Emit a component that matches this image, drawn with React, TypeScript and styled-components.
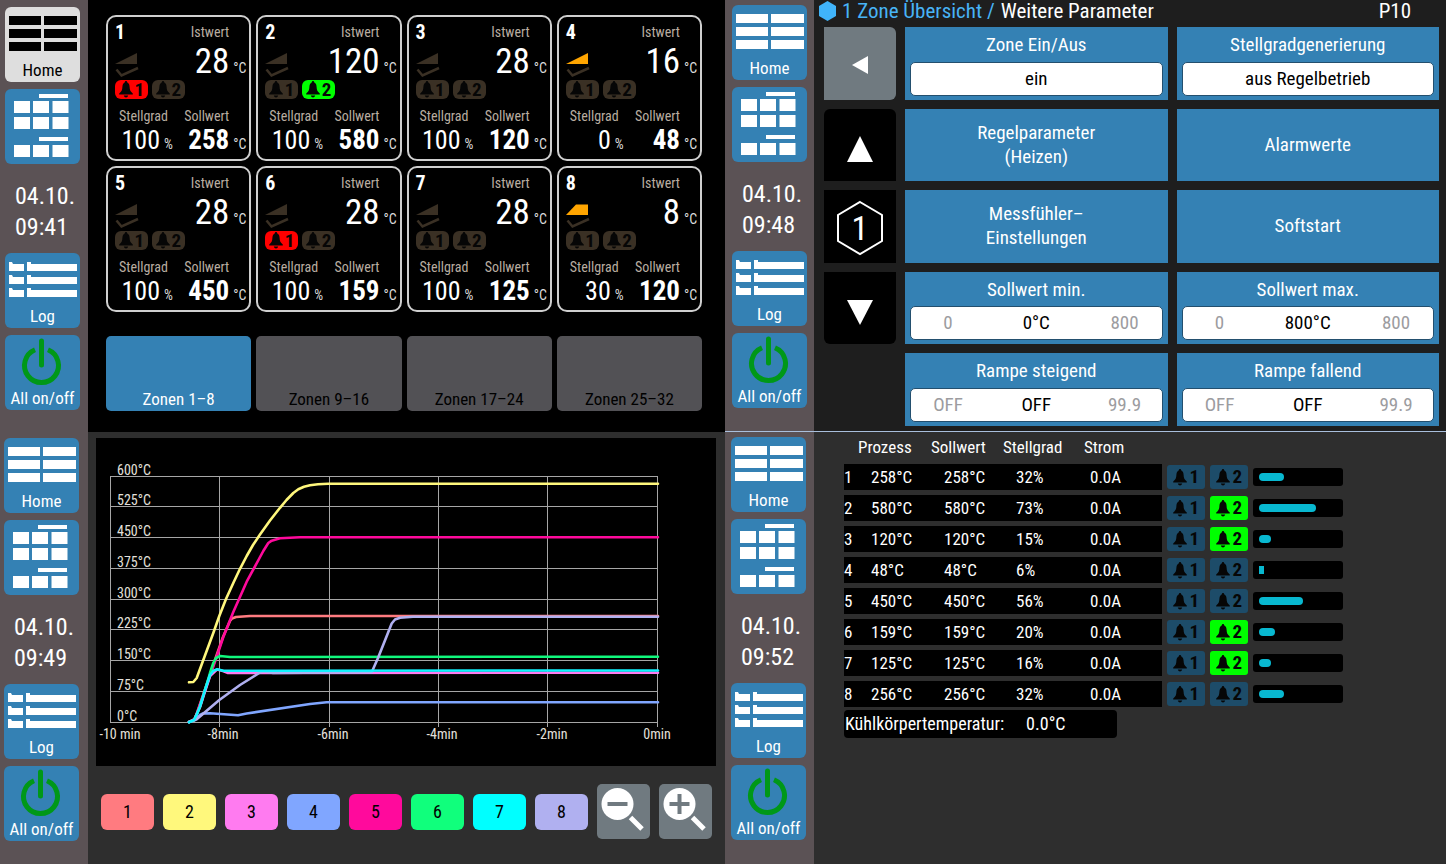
import React from "react";
import styled, { createGlobalStyle, css } from "styled-components";

const color = {
  blue: "#3481b4",
  rail: "#5b5255",
  panel: "#2e2e2e",
  dark: "#1e1e1e",
  idle: "#3a3024",
  alarmIdle: "#1d4c69",
  green: "#00ff00",
  red: "#ff0000",
  grey: "#707a80",
};

const GlobalStyle = createGlobalStyle`
  * { box-sizing: border-box; }
  body {
    margin: 0;
    background: #000;
    color: #fff;
    font-family: "Roboto Condensed", "Liberation Sans Narrow", "Open Sans Condensed", "DejaVu Sans Condensed", sans-serif;
  }
  button, input { font: inherit; color: inherit; border: 0; padding: 0; margin: 0; }
  button { cursor: pointer; }
  svg { display: block; flex: none; }
`;

const Screens = styled.main`
  display: grid;
  grid-template-columns: 725fr 721fr;
  grid-template-rows: 1fr 1fr;
  min-height: 100vh;
`;

const Screen = styled.section<{ $bg: string; $line?: boolean }>`
  display: flex;
  min-width: 0;
  background: ${(p) => p.$bg};
  ${(p) => p.$line && css`border-bottom: 1px solid #a9bfdc;`}
`;

/* ---------- side rail ---------- */

const Rail = styled.nav<{ $top: number; $left: number; $width: number }>`
  flex: none;
  display: flex;
  flex-direction: column;
  gap: 7px;
  width: ${(p) => p.$width}px;
  padding: ${(p) => p.$top}px 0 0 ${(p) => p.$left}px;
  background: ${color.rail};
`;

const RailButton = styled.button<{ $active?: boolean }>`
  display: flex;
  flex-direction: column;
  width: 75px;
  height: 75px;
  border-radius: 6px;
  background: ${(p) => (p.$active ? "#dedede" : color.blue)};
  color: ${(p) => (p.$active ? "#000" : "#fff")};
  overflow: hidden;
`;

const RailLabel = styled.span`
  width: 100%;
  font-size: 17px;
  line-height: 23px;
  text-align: center;
  white-space: nowrap;
`;

const Clock = styled.time`
  height: 75px;
  padding: 10px 0 0 10px;
  font-size: 24px;
  line-height: 31px;
  white-space: nowrap;
`;

const HomeIcon = () => (
  <svg width="75" height="52" fill="currentColor" aria-hidden="true">
    {[9, 22, 35].map((y) => (
      <path key={y} d={`M4 ${y}h32v9h-32z M39 ${y}h33v9h-33z`} />
    ))}
  </svg>
);

const ZonesIcon = () => (
  <svg width="75" height="75" fill="currentColor" aria-hidden="true">
    <path d="M34 5h29v4h-29z M34 48h29v4h-29z" />
    {[12, 28, 56].map((y) => (
      <path key={y} d={`M9 ${y}h16v12h-16z M28 ${y}h16v12h-16z M47.500 ${y}h16v12h-16z`} />
    ))}
  </svg>
);

const LogIcon = () => (
  <svg width="75" height="52" fill="currentColor" aria-hidden="true">
    {[9, 22, 35].map((y) => (
      <path key={y} d={`M4 ${y}h3l1 2h11v7h-15z M22 ${y}h4v2h46v7h-50z`} />
    ))}
  </svg>
);

const PowerIcon = () => (
  <svg width="75" height="52" fill="none" stroke="#009818" strokeWidth="5" aria-hidden="true">
    <path d="M30 14.800A17 17 0 1 0 43 14.800" />
    <path d="M36.500 6v24" strokeLinecap="round" />
  </svg>
);

type RailProps = { time: string; top: number; left: number; width: number; homeActive?: boolean };

const SideRail = ({ time, top, left, width, homeActive }: RailProps) => (
  <Rail $top={top} $left={left} $width={width} aria-label="Hauptnavigation">
    <RailButton $active={homeActive}>
      <HomeIcon />
      <RailLabel>Home</RailLabel>
    </RailButton>
    <RailButton aria-label="Zonen">
      <ZonesIcon />
    </RailButton>
    <Clock>
      04.10.
      <br />
      {time}
    </Clock>
    <RailButton>
      <LogIcon />
      <RailLabel>Log</RailLabel>
    </RailButton>
    <RailButton>
      <PowerIcon />
      <RailLabel>All on/off</RailLabel>
    </RailButton>
  </Rail>
);

/* ---------- alarm badges ---------- */

const BadgeBox = styled.span<{ $bg: string; $wide?: boolean }>`
  display: flex;
  align-items: center;
  justify-content: space-between;
  flex: none;
  width: ${(p) => (p.$wide ? 38 : 33)}px;
  height: ${(p) => (p.$wide ? 24 : 19)}px;
  padding: 0 ${(p) => (p.$wide ? 6 : 4)}px;
  border-radius: ${(p) => (p.$wide ? 3 : 6)}px;
  background: ${(p) => p.$bg};
  color: #060606;
  font-size: 19px;
  font-weight: 700;
  line-height: 20px;
`;

const Badge = ({ n, bg, wide }: { n: number; bg: string; wide?: boolean }) => (
  <BadgeBox $bg={bg} $wide={wide}>
    <svg width="14" height="17" viewBox="0 0 14 17" fill="currentColor" aria-hidden="true">
      <path d="M7 0c.8 0 1.200.6 1.300 1.500C10 2.300 10.500 4 10.600 6c.1 3 .8 4.500 3.200 6.500V13.400H.2v-.9C2.600 10.500 3.300 9 3.400 6c.1-2 .6-3.700 2.300-4.500C5.800.6 6.200 0 7 0z M4.800 14.600h4.400c-.3 1.300-1.200 1.900-2.200 1.900s-1.900-.6-2.200-1.900z" />
    </svg>
    {n}
  </BadgeBox>
);

/* ---------- zone overview ---------- */

const Overview = styled.div`
  flex: 1;
  min-width: 0;
  padding: 15px 23px 21px 18px;
`;

const FourColumns = styled.div`
  display: grid;
  grid-template-columns: repeat(4, 1fr);
  gap: 5px;
`;

const Tabs = styled(FourColumns)`
  margin-top: 24px;
`;

const Card = styled.article`
  height: 146px;
  padding: 4px 3px 0 7px;
  border: 2px solid #cfcfcf;
  border-radius: 10px;
`;

const CardRow = styled.div<{ $h: number }>`
  display: flex;
  align-items: center;
  justify-content: space-between;
  height: ${(p) => p.$h}px;
`;

const LabelRow = styled(CardRow)`
  padding: 0 17px 0 4px;
`;

const CardLabel = styled.span`
  color: #b9ada0;
  font-size: 14px;
  line-height: 16px;
`;

const ZoneNo = styled.strong`
  font-size: 20px;
  line-height: 22px;
`;

const BadgeRow = styled.div<{ $gap: number }>`
  display: flex;
  align-items: center;
  gap: ${(p) => p.$gap}px;
`;

const Reading = styled.span<{ $size: number; $bold?: boolean; $width?: number }>`
  display: flex;
  align-items: baseline;
  justify-content: flex-end;
  width: ${(p) => (p.$width ? `${p.$width}px` : "auto")};
  font-size: ${(p) => p.$size}px;
  font-weight: ${(p) => (p.$bold ? 700 : 400)};
  line-height: 32px;
`;

const Unit = styled.span`
  width: 17px;
  padding-left: 4px;
  font-size: 14px;
  font-weight: 400;
  line-height: 16px;
  color: #ddd;
  white-space: nowrap;
`;

const Tab = styled.button<{ $active?: boolean }>`
  display: flex;
  align-items: flex-end;
  justify-content: center;
  height: 75px;
  padding-bottom: 2px;
  border-radius: 5px;
  background: ${(p) => (p.$active ? color.blue : "#525155")};
  color: ${(p) => (p.$active ? "#fff" : "#000")};
  font-size: 17px;
  line-height: 20px;
`;

const RampIcon = ({ kind }: { kind?: "ramp" | "hold" }) => (
  <svg width="24" height="32" viewBox="0 0 24 32" aria-hidden="true">
    {kind === "hold" ? (
      <path d="M0 18 10 7.500H22V18z" fill="#ffa500" />
    ) : (
      <path d="M0 18 22 7V18z" fill={kind ? "#ffa500" : color.idle} />
    )}
    <path d="M1.500 23.500 6.500 29.500 23 22" fill="none" stroke={color.idle} strokeWidth="2.500" />
  </svg>
);

type Zone = {
  actual: number;
  output: number;
  target: number;
  alarm1?: boolean;
  alarm2?: boolean;
  ramp?: "ramp" | "hold";
};

const zones: Zone[] = [
  { actual: 28, output: 100, target: 258, alarm1: true },
  { actual: 120, output: 100, target: 580, alarm2: true },
  { actual: 28, output: 100, target: 120 },
  { actual: 16, output: 0, target: 48, ramp: "ramp" },
  { actual: 28, output: 100, target: 450 },
  { actual: 28, output: 100, target: 159, alarm1: true },
  { actual: 28, output: 100, target: 125 },
  { actual: 8, output: 30, target: 120, ramp: "hold" },
];

const ZoneCard = ({ zone, no }: { zone: Zone; no: number }) => (
  <Card>
    <CardRow $h={22}>
      <ZoneNo>{no}</ZoneNo>
      <LabelRow as="span" $h={20}>
        <CardLabel>Istwert</CardLabel>
      </LabelRow>
    </CardRow>
    <CardRow $h={37}>
      <RampIcon kind={zone.ramp} />
      <Reading $size={35}>
        {zone.actual}
        <Unit>°C</Unit>
      </Reading>
    </CardRow>
    <BadgeRow $gap={4}>
      <Badge n={1} bg={zone.alarm1 ? color.red : color.idle} />
      <Badge n={2} bg={zone.alarm2 ? color.green : color.idle} />
    </BadgeRow>
    <LabelRow $h={33}>
      <CardLabel>Stellgrad</CardLabel>
      <CardLabel>Sollwert</CardLabel>
    </LabelRow>
    <CardRow $h={16}>
      <Reading $size={26} $width={62}>
        {zone.output}
        <Unit>%</Unit>
      </Reading>
      <Reading $size={27} $bold>
        {zone.target}
        <Unit>°C</Unit>
      </Reading>
    </CardRow>
  </Card>
);

const ZoneOverview = () => (
  <Screen $bg="#000">
    <SideRail time="09:41" top={7} left={5} width={88} homeActive />
    <Overview>
      <FourColumns>
        {zones.map((z, i) => (
          <ZoneCard key={i} zone={z} no={i + 1} />
        ))}
      </FourColumns>
      <Tabs>
        <Tab $active>Zonen 1–8</Tab>
        <Tab>Zonen 9–16</Tab>
        <Tab>Zonen 17–24</Tab>
        <Tab>Zonen 25–32</Tab>
      </Tabs>
    </Overview>
  </Screen>
);

/* ---------- parameters ---------- */

const Parameters = styled.div`
  flex: 1;
  display: flex;
  flex-direction: column;
  min-width: 0;
  padding: 0 7px 5px 5px;
`;

const Crumbs = styled.header`
  display: flex;
  align-items: center;
  gap: 6px;
  height: 22px;
  margin-bottom: 5px;
  padding-right: 28px;
  font-size: 21px;
  line-height: 22px;
  white-space: nowrap;
`;

const CrumbLink = styled.a`
  color: #48b4f6;
  text-decoration: none;
`;

const PageNo = styled.span`
  margin-left: auto;
`;

const ParamGrid = styled.div`
  flex: 1;
  display: grid;
  grid-template-columns: 72px 1fr 1fr;
  grid-template-rows: repeat(5, 1fr);
  gap: 9px;
  padding-left: 5px;
`;

const NavButton = styled.button<{ $grey?: boolean; $radius: string }>`
  display: flex;
  align-items: center;
  justify-content: center;
  grid-column: 1;
  background: ${(p) => (p.$grey ? color.grey : "#000")};
  border-radius: ${(p) => p.$radius};
`;

const tile = css`
  background: ${color.blue};
  color: #fff;
  font-size: 19px;
  line-height: 24px;
  text-align: center;
`;

const Tile = styled.button`
  ${tile}
  white-space: pre-line;
`;

const Field = styled.label`
  ${tile}
  display: flex;
  flex-direction: column;
  justify-content: space-between;
  padding: 6px 5px 4px;
`;

const ValueBox = styled.span`
  display: grid;
  grid-template-columns: 74px 1fr 74px;
  align-items: center;
  height: 34px;
  border: 1px solid #234f6e;
  border-radius: 5px;
  background: #fff;
  color: #9c9ca0;
`;

const ValueInput = styled.input<{ $full?: boolean }>`
  grid-column: ${(p) => (p.$full ? "1 / -1" : "auto")};
  width: 100%;
  min-width: 0;
  background: none;
  color: #000;
  text-align: center;
  outline: 0;
`;

type FieldProps = { label: string; value: string; min?: string; max?: string };

const ParamField = ({ label, value, min, max }: FieldProps) => (
  <Field>
    {label}
    <ValueBox>
      {min && <span>{min}</span>}
      <ValueInput defaultValue={value} $full={!min} />
      {max && <span>{max}</span>}
    </ValueBox>
  </Field>
);

const HexText = styled.text`
  font-size: 34px;
  fill: #fff;
`;

const ParameterPage = () => (
  <Screen $bg={color.dark} $line>
    <SideRail time="09:48" top={5} left={7} width={89} />
    <Parameters>
      <Crumbs>
        <svg width="17" height="20" viewBox="0 0 17 20" aria-hidden="true">
          <path d="M8.500 0 17 5v10l-8.500 5L0 15V5z" fill="#40b4fa" />
        </svg>
        <CrumbLink href="#zone">1 Zone Übersicht /</CrumbLink>
        <span>Weitere Parameter</span>
        <PageNo>P10</PageNo>
      </Crumbs>
      <ParamGrid>
        <NavButton $grey $radius="0 6px 6px 0" aria-label="Zurück">
          <svg width="16" height="22" fill="#fff">
            <path d="M0 13 16 4v18z" />
          </svg>
        </NavButton>
        <ParamField label="Zone Ein/Aus" value="ein" />
        <ParamField label="Stellgradgenerierung" value="aus Regelbetrieb" />
        <NavButton $radius="6px 6px 0 0" aria-label="Vorherige Zone">
          <svg width="26" height="34" fill="#fff">
            <path d="M0 34 13 8l13 26z" />
          </svg>
        </NavButton>
        <Tile>{"Regelparameter\n(Heizen)"}</Tile>
        <Tile>Alarmwerte</Tile>
        <NavButton $radius="0" aria-label="Zone 1">
          <svg width="48" height="60" viewBox="0 0 48 60">
            <path d="M24 6 46 19v26L24 58 2 45V19z" fill="none" stroke="#fff" strokeWidth="2" />
            <HexText x="24" y="44" textAnchor="middle">
              1
            </HexText>
          </svg>
        </NavButton>
        <Tile>{"Messfühler–\nEinstellungen"}</Tile>
        <Tile>Softstart</Tile>
        <NavButton $radius="0 0 6px 6px" aria-label="Nächste Zone">
          <svg width="26" height="34" fill="#fff">
            <path d="M0 9h26L13 34z" />
          </svg>
        </NavButton>
        <ParamField label="Sollwert min." min="0" value="0°C" max="800" />
        <ParamField label="Sollwert max." min="0" value="800°C" max="800" />
        <span />
        <ParamField label="Rampe steigend" min="OFF" value="OFF" max="99.9" />
        <ParamField label="Rampe fallend" min="OFF" value="OFF" max="99.9" />
      </ParamGrid>
    </Parameters>
  </Screen>
);

/* ---------- trend chart ---------- */

const Trend = styled.div`
  flex: 1;
  min-width: 0;
  padding: 6px 9px 0 8px;
`;

const Chart = styled.svg`
  width: 100%;
  height: auto;
  background: #000;
`;

const AxisText = styled.text`
  font-size: 14px;
  fill: #e4e0dc;
`;

const Legend = styled.div`
  display: flex;
  align-items: center;
  gap: 9px;
  padding: 18px 4px 0 5px;
`;

const SeriesButton = styled.button<{ $bg: string }>`
  width: 53px;
  height: 36px;
  border-radius: 6px;
  background: ${(p) => p.$bg};
  color: #000;
  font-size: 18px;
`;

const ZoomButton = styled.button`
  width: 53px;
  height: 55px;
  border-radius: 5px;
  background: ${color.grey};
`;

const yAxis = [
  ["600°C", 38.5],
  ["525°C", 68.5],
  ["450°C", 99.5],
  ["375°C", 130.5],
  ["300°C", 161.5],
  ["225°C", 191.5],
  ["150°C", 222.5],
  ["75°C", 253.5],
  ["0°C", 284.5],
] as const;

const xAxis = [
  ["-10 min", 14.5, 24],
  ["-8min", 123.5, 127],
  ["-6min", 233.5, 237],
  ["-4min", 342.5, 346],
  ["-2min", 451.5, 456],
  ["0min", 561.5, 561],
] as const;

const curves: [string, string][] = [
  ["#ff7b80", "93,284 99,281 120,219 127,199 134,183 136,180.500 140,179 154,178 562,178"],
  ["#fff77c", "93,244.300 97.300,244 100.700,240 107.300,222 117.300,195 123.300,178 130,161 137.300,145 144,130.800 150.700,118 157,107 164,96.500 174,82.500 184,69.800 190.500,62 197.300,55 202.300,51.300 208,48.800 214,47.300 222,46.200 232,45.800 562,45.800"],
  ["#ff0a9c", "93,284 99,281 120.700,218.700 127.300,199 137.300,174 150.700,143.700 167.300,113 172.300,105 175.700,102.700 184,100.300 204,99.300 562,99.300"],
  ["#10f87c", "93,284 98,282 104,269 114,235 117.300,225 120,220 124,218 134,219 562,218.700"],
  ["#ff7bf0", "93,284 98,282 104,269 114,238 121,231.500 127,233 132,235 562,234.700"],
  ["#80a6ff", "93,284 99,282 104,277 107,275.500 114,275.300 142,277.300 150.700,275.500 214,266 230.700,264.300 562,264.300"],
  ["#b0b0f0", "93,284 100.700,281.300 123.300,262 144,247 164,234.500 168,233.500 177,235 275.700,234.300 282,220 295.700,185.500 299,181.500 304,179.700 317,178.700 562,178.700"],
  ["#10f4ff", "93,284.300 98,282 101,276 104,268.500 109,252 114,237 117.300,232.700 121.300,231.300 127.300,232.700 562,232.500"],
];

const series = ["#ff7b80", "#fff87c", "#ff7bf0", "#80a6ff", "#ff0a9c", "#10ff7c", "#00ffff", "#b0b0f0"];

const Magnifier = ({ plus }: { plus?: boolean }) => (
  <svg width="53" height="55" viewBox="0 0 53 55" aria-hidden="true">
    <circle cx="20.500" cy="20" r="16" fill="#fff" />
    <path d="M33.500 33.500 45 45" stroke="#fff" strokeWidth="5" />
    <path d={plus ? "M10.500 20h20M20.500 10v20" : "M10.500 20h20"} stroke={color.grey} strokeWidth="4" />
  </svg>
);

const TrendPage = () => (
  <Screen $bg={color.panel}>
    <SideRail time="09:49" top={6} left={4} width={88} />
    <Trend>
      <Chart viewBox="0 0 620 328" role="img" aria-label="Temperaturverlauf">
        <g stroke="#a6a6a6" strokeWidth="1">
          {yAxis.map(([t, y]) => (
            <line key={t} x1="14" x2="562" y1={y} y2={y} />
          ))}
          {xAxis.map(([t, x], i) => (
            <line key={t} x1={x} x2={x} y1="38" y2={i ? 289 : 285} />
          ))}
        </g>
        {yAxis.map(([t, y]) => (
          <AxisText key={t} x="21" y={y - 1.5}>
            {t}
          </AxisText>
        ))}
        {xAxis.map(([t, , x]) => (
          <AxisText key={t} x={x} y="301" textAnchor="middle">
            {t}
          </AxisText>
        ))}
        {curves.map(([c, pts]) => (
          <polyline key={c} points={pts} fill="none" stroke={c} strokeWidth="2.600" strokeLinejoin="round" strokeLinecap="round" />
        ))}
      </Chart>
      <Legend>
        {series.map((c, i) => (
          <SeriesButton key={c} $bg={c}>
            {i + 1}
          </SeriesButton>
        ))}
        <ZoomButton aria-label="Verkleinern">
          <Magnifier />
        </ZoomButton>
        <ZoomButton aria-label="Vergrößern">
          <Magnifier plus />
        </ZoomButton>
      </Legend>
    </Trend>
  </Screen>
);

/* ---------- zone table ---------- */

const Report = styled.div`
  flex: 1;
  min-width: 0;
  padding: 0 30px;
`;

const Table = styled.table`
  border-collapse: separate;
  border-spacing: 0 5px;
  table-layout: fixed;
  width: 499px;
  font-size: 17px;
  line-height: 24px;
  white-space: nowrap;
`;

const Col = styled.col<{ $w: number }>`
  width: ${(p) => p.$w}px;
`;

const Head = styled.th`
  height: 22px;
  padding: 0 0 2px;
  font-weight: 400;
  line-height: 20px;
  text-align: left;
`;

const Cell = styled.td<{ $pad: number }>`
  height: 26px;
  padding: 0 0 0 ${(p) => p.$pad}px;
  background: #000;
`;

const StatusCell = styled.td`
  padding: 0 0 0 5px;
`;

const Track = styled.span`
  display: flex;
  align-items: center;
  flex: 1;
  height: 18px;
  padding: 0 6px;
  border-radius: 3px;
  background: #000;
`;

const Fill = styled.span<{ $square: boolean }>`
  height: 8px;
  border-radius: ${(p) => (p.$square ? 0 : 4)}px;
  background: #08b8d0;
`;

const HeatSink = styled.p`
  display: flex;
  gap: 22px;
  width: 273px;
  margin: -2px 0 0;
  padding: 0 1px;
  border-radius: 4px;
  background: #000;
  font-size: 18px;
  line-height: 28px;
`;

const rows: [string, string, number, boolean][] = [
  ["258°C", "258°C", 32, false],
  ["580°C", "580°C", 73, true],
  ["120°C", "120°C", 15, true],
  ["48°C", "48°C", 6, false],
  ["450°C", "450°C", 56, false],
  ["159°C", "159°C", 20, true],
  ["125°C", "125°C", 16, true],
  ["256°C", "256°C", 32, false],
];

const TablePage = () => (
  <Screen $bg={color.panel}>
    <SideRail time="09:52" top={5} left={6} width={89} />
    <Report>
      <Table>
        <colgroup>
          {[14, 73, 72, 81, 78, 181].map((w, i) => (
            <Col key={i} $w={w} />
          ))}
        </colgroup>
        <thead>
          <tr>
            <Head />
            <Head>Prozess</Head>
            <Head>Sollwert</Head>
            <Head>Stellgrad</Head>
            <Head>Strom</Head>
            <Head />
          </tr>
        </thead>
        <tbody>
          {rows.map(([actual, target, output, alarm], i) => (
            <tr key={i}>
              <Cell $pad={0}>{i + 1}</Cell>
              <Cell $pad={13}>{actual}</Cell>
              <Cell $pad={13}>{target}</Cell>
              <Cell $pad={13}>{output}%</Cell>
              <Cell $pad={6}>0.0A</Cell>
              <StatusCell>
                <BadgeRow $gap={5}>
                  <Badge n={1} bg={color.alarmIdle} wide />
                  <Badge n={2} bg={alarm ? color.green : color.alarmIdle} wide />
                  <Track>
                    <Fill $square={output < 10} style={{ width: `${output}%` }} />
                  </Track>
                </BadgeRow>
              </StatusCell>
            </tr>
          ))}
        </tbody>
      </Table>
      <HeatSink>
        <span>Kühlkörpertemperatur:</span>
        <span>0.0°C</span>
      </HeatSink>
    </Report>
  </Screen>
);

export default function App() {
  return (
    <>
      <GlobalStyle />
      <Screens>
        <ZoneOverview />
        <ParameterPage />
        <TrendPage />
        <TablePage />
      </Screens>
    </>
  );
}
